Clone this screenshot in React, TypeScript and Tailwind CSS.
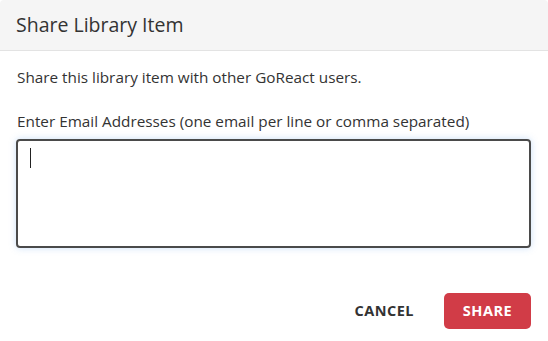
export default function App() {
  return (
    <div
      className="w-[548px] h-[341px] bg-white text-[#333] rounded-[4px] overflow-hidden flex flex-col"
      style={{ fontFamily: '"Open Sans", "Noto Sans", sans-serif' }}
    >
      <div className="h-[51px] bg-[#f5f5f5] border-b border-[#e3e3e3] flex items-center px-[16px]">
        <h1 className="text-[19.5px] leading-none text-[#333]">Share Library Item</h1>
      </div>

      <div className="flex flex-col pl-4 pr-[17px] pt-4">
        <p className="text-[15.3px] leading-5 pl-px">Share this library item with other GoReact users.</p>
        <label className="text-[15.3px] leading-5 mt-6 pl-px">
          Enter Email Addresses (one email per line or comma separated)
        </label>
        <div className="mt-2 h-[109px] border-2 border-[#4a4a4a] rounded-[4px] shadow-[0_0_7px_rgba(102,160,233,0.35)] px-3 pt-[7px]">
          <span className="block w-px h-5 bg-[#222]" />
        </div>
      </div>

      <div className="flex items-center justify-end gap-[30px] pr-[17px] mt-[45px]">
        <button className="text-[14.5px] font-bold tracking-[0.5px] text-[#333]">CANCEL</button>
        <button className="w-[87px] h-[36px] rounded-[5px] bg-[#d13c47] text-white text-[14.5px] font-bold tracking-[0.5px]">
          SHARE
        </button>
      </div>
    </div>
  )
}
